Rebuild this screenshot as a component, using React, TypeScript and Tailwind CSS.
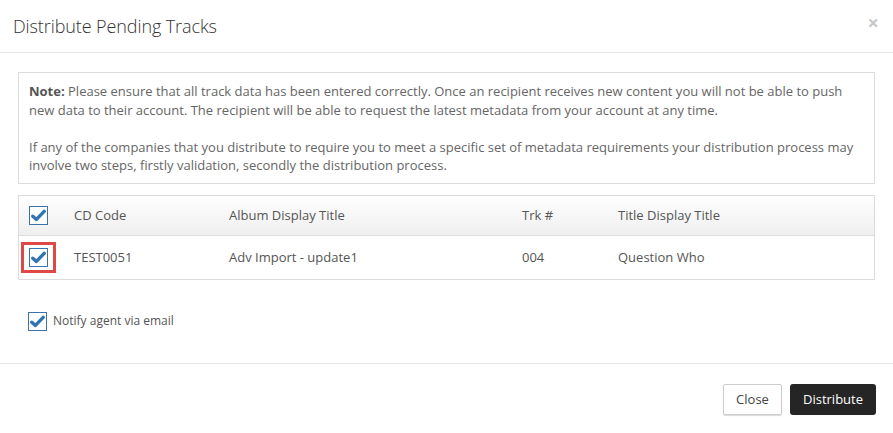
import React from "react";

function Check({ className = "" }: { className?: string }) {
  return (
    <span
      className={
        "flex h-[19px] w-[19px] items-center justify-center border border-[#3b73ad] bg-white " +
        className
      }
    >
      <svg width="15" height="13" viewBox="0 0 15 13">
        <path
          d="M1.8 7.2 L5.4 10.4 L13.2 2.4"
          fill="none"
          stroke="#2f73b3"
          strokeWidth="3.4"
          strokeLinecap="round"
          strokeLinejoin="round"
        />
      </svg>
    </span>
  );
}

export default function App() {
  return (
    <div
      className="w-[893px] h-[433px] bg-white text-[13px] text-[#555]"
      style={{ fontFamily: '"Open Sans", "Liberation Sans", sans-serif' }}
    >
      {/* header */}
      <div className="flex h-[53px] items-center justify-between border-b border-[#e5e5e5] pl-[13px] pr-[14px]">
        <h4 className="text-[18px] font-light text-[#333] tracking-[-0.1px]">Distribute Pending Tracks</h4>
        <span className="text-[20px] font-bold leading-none text-[#c8c8c8] -mt-[6px]">×</span>
      </div>

      {/* body */}
      <div className="px-[18px] pt-[19px] pr-[18px]">
        <div className="border border-[#dcdcdc] px-[10px] pt-[9px] pb-[8px] leading-[18.6px] text-[#666]">
          <p>
            <b className="font-bold text-[#555]">Note:</b> Please ensure that all track data has been entered
            correctly. Once an recipient receives new content you will not be able to push new data to their
            account. The recipient will be able to request the latest metadata from your account at any time.
          </p>
          <p className="mt-[18.6px]">
            If any of the companies that you distribute to require you to meet a specific set of metadata
            requirements your distribution process may involve two steps, firstly validation, secondly the
            distribution process.
          </p>
        </div>

        <div className="mt-[11px] border border-[#dcdcdc]">
          <div className="flex h-[40px] items-center border-b border-[#dcdcdc] bg-gradient-to-b from-white to-[#efefef]">
            <div className="w-[55px] pl-[10px]">
              <Check />
            </div>
            <div className="w-[155px]">CD Code</div>
            <div className="w-[293px]">Album Display Title</div>
            <div className="w-[96px]">Trk #</div>
            <div>Title Display Title</div>
          </div>
          <div className="flex h-[43px] items-center">
            <div className="w-[55px] pl-[2px]">
              <span className="flex h-[31px] w-[35px] items-center justify-center border-[3px] border-[#e04848]">
                <Check />
              </span>
            </div>
            <div className="w-[155px]">TEST0051</div>
            <div className="w-[293px]">Adv Import - update1</div>
            <div className="w-[96px]">004</div>
            <div>Question Who</div>
          </div>
        </div>

        <div className="flex h-[83px] items-center pl-[10px]">
          <Check />
          <span className="ml-[6px] text-[12px] text-[#555]">Notify agent via email</span>
        </div>
      </div>

      {/* footer */}
      <div className="flex justify-end gap-[8px] border-t border-[#e5e5e5] pt-[20px] pr-[17px]">
        <button className="h-[31px] w-[59px] rounded-[2px] border border-[#ccc] bg-white text-[13px] text-[#444] shadow-[0_1px_1px_rgba(0,0,0,0.15)]">
          Close
        </button>
        <button className="h-[31px] w-[86px] rounded-[3px] bg-[#252525] text-[13px] text-white">
          Distribute
        </button>
      </div>
    </div>
  );
}
